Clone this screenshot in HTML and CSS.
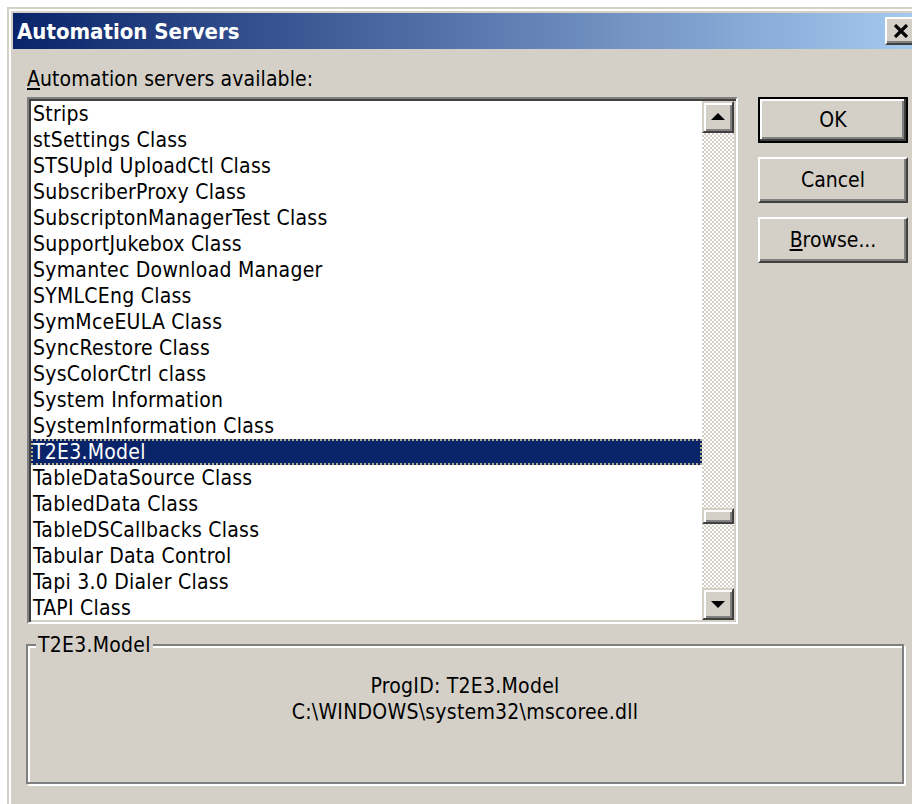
FILE: index.html
```html
<!DOCTYPE html>
<html lang="en">
<head>
<meta charset="utf-8">
<title>Automation Servers</title>
<link rel="stylesheet" href="styles.css">
</head>
<body>
<div class="window">
  <div class="titlebar">
    <span class="title">Automation Servers</span>
    <button class="close" type="button" aria-label="Close">
      <svg width="16" height="14" viewBox="0 0 16 14"><path d="M2 1 L14 13 M14 1 L2 13" stroke="#000" stroke-width="3.2" fill="none"/></svg>
    </button>
  </div>
  <div class="content">
    <div class="caption"><u>A</u>utomation servers available:</div>
    <div class="listbox">
      <ul class="items">
        <li>Strips</li>
        <li>stSettings Class</li>
        <li>STSUpld UploadCtl Class</li>
        <li>SubscriberProxy Class</li>
        <li>SubscriptonManagerTest Class</li>
        <li>SupportJukebox Class</li>
        <li>Symantec Download Manager</li>
        <li>SYMLCEng Class</li>
        <li>SymMceEULA Class</li>
        <li>SyncRestore Class</li>
        <li>SysColorCtrl class</li>
        <li>System Information</li>
        <li>SystemInformation Class</li>
        <li class="selected">T2E3.Model</li>
        <li>TableDataSource Class</li>
        <li>TabledData Class</li>
        <li>TableDSCallbacks Class</li>
        <li>Tabular Data Control</li>
        <li>Tapi 3.0 Dialer Class</li>
        <li>TAPI Class</li>
      </ul>
      <div class="vscroll">
        <div class="arrow">
          <svg width="16" height="8" viewBox="0 0 16 8"><polygon points="8,0 15,7 1,7" fill="#000"/></svg>
        </div>
        <div class="track"><div class="thumb"></div></div>
        <div class="arrow">
          <svg width="16" height="8" viewBox="0 0 16 8"><polygon points="1,1 15,1 8,8" fill="#000"/></svg>
        </div>
      </div>
    </div>
    <div class="buttons">
      <button class="btn default" type="button">OK</button>
      <button class="btn" type="button">Cancel</button>
      <button class="btn" type="button"><u>B</u>rowse...</button>
    </div>
  </div>
  <fieldset class="group">
    <legend>T2E3.Model</legend>
    <p class="details">ProgID: T2E3.Model<br>C:\WINDOWS\system32\mscoree.dll</p>
  </fieldset>
</div>
</body>
</html>
```

FILE: styles.css
```css
* {
  box-sizing: border-box;
}

html,
body {
  margin: 0;
  background: #fff;
  overflow: hidden;
}

body {
  font-family: "DejaVu Sans Condensed", "DejaVu Sans", sans-serif;
  font-size: 21px;
  letter-spacing: 0.25px;
  color: #000;
}

/* dialog frame: classic 3D window edge */
.window {
  margin: 7px 0 0 7px;
  width: 920px;
  height: 830px;
  background: #d4d0c8;
  border: 2px solid;
  border-color: #d4d0c8 #404040 #404040 #d4d0c8;
  box-shadow: inset 2px 2px #fff, inset -2px -2px #808080;
  padding: 4px;
}

.titlebar {
  height: 36px;
  display: flex;
  align-items: center;
  padding: 0 4px;
  background: linear-gradient(to right, #0a246a, #a6caf0);
}

.title {
  flex: 1;
  color: #fff;
  font-weight: bold;
  font-size: 22px;
  letter-spacing: 0;
}

.close {
  width: 32px;
  height: 28px;
  padding: 0;
  display: flex;
  align-items: center;
  justify-content: center;
  background: #d4d0c8;
  border: 2px solid;
  border-color: #fff #404040 #404040 #fff;
  box-shadow: inset -2px -2px #808080;
}

.content {
  display: grid;
  grid-template-columns: 711px 150px;
  column-gap: 20px;
  row-gap: 5px;
  padding: 17px 0 0 14px;
}

.caption {
  grid-column: 1;
  line-height: 26px;
  letter-spacing: 0.1px;
}

.caption u,
.btn u {
  text-underline-offset: 2px;
}

/* sunken list box */
.listbox {
  grid-column: 1;
  grid-row: 2;
  height: 527px;
  display: flex;
  background: #fff;
  border: 2px solid;
  border-color: #808080 #fff #fff #808080;
  box-shadow: inset 2px 2px #404040, inset -2px -2px #d4d0c8;
  padding: 2px;
}

.items {
  flex: 1;
  list-style: none;
  margin: 0;
  padding: 0;
  overflow: hidden;
}

.items li {
  height: 26px;
  line-height: 26px;
  padding-left: 2px;
  white-space: nowrap;
}

.items li.selected {
  background: #0a246a;
  color: #fff;
  outline: 2px dotted #b8b090;
  outline-offset: -2px;
}

.vscroll {
  width: 32px;
  display: flex;
  flex-direction: column;
}

.arrow {
  height: 32px;
  display: flex;
  align-items: center;
  justify-content: center;
  background: #d4d0c8;
  border: 2px solid;
  border-color: #d4d0c8 #404040 #404040 #d4d0c8;
  box-shadow: inset 2px 2px #fff, inset -2px -2px #808080;
}

.track {
  flex: 1;
  padding-top: 375px;
  background: repeating-conic-gradient(#d4d0c8 0 25%, #fff 0 50%) 0 0 / 4px 4px;
}

.thumb {
  height: 16px;
  background: #d4d0c8;
  border: 2px solid;
  border-color: #d4d0c8 #404040 #404040 #d4d0c8;
  box-shadow: inset 2px 2px #fff, inset -2px -2px #808080;
}

.buttons {
  grid-column: 2;
  grid-row: 2;
  display: flex;
  flex-direction: column;
  gap: 14px;
}

.btn {
  width: 150px;
  height: 46px;
  padding: 0;
  font: inherit;
  color: #000;
  background: #d4d0c8;
  border: 2px solid;
  border-color: #fff #404040 #404040 #fff;
  box-shadow: inset -2px -2px #808080;
}

.btn.default {
  border-color: #000;
  box-shadow: inset -2px -2px #404040, inset 2px 2px #fff, inset -4px -4px #808080;
}

/* etched group box */
.group {
  margin: 8px 17px 0 13px;
  height: 152px;
  padding: 0;
  border: 2px solid #808080;
  box-shadow: inset 2px 2px #fff, 2px 2px #fff;
  min-width: 0;
}

.group legend {
  margin-left: 8px;
  padding: 0 2px;
  line-height: 26px;
  background: #d4d0c8;
}

.details {
  margin: 15px 0 0;
  text-align: center;
  line-height: 26px;
}
```
